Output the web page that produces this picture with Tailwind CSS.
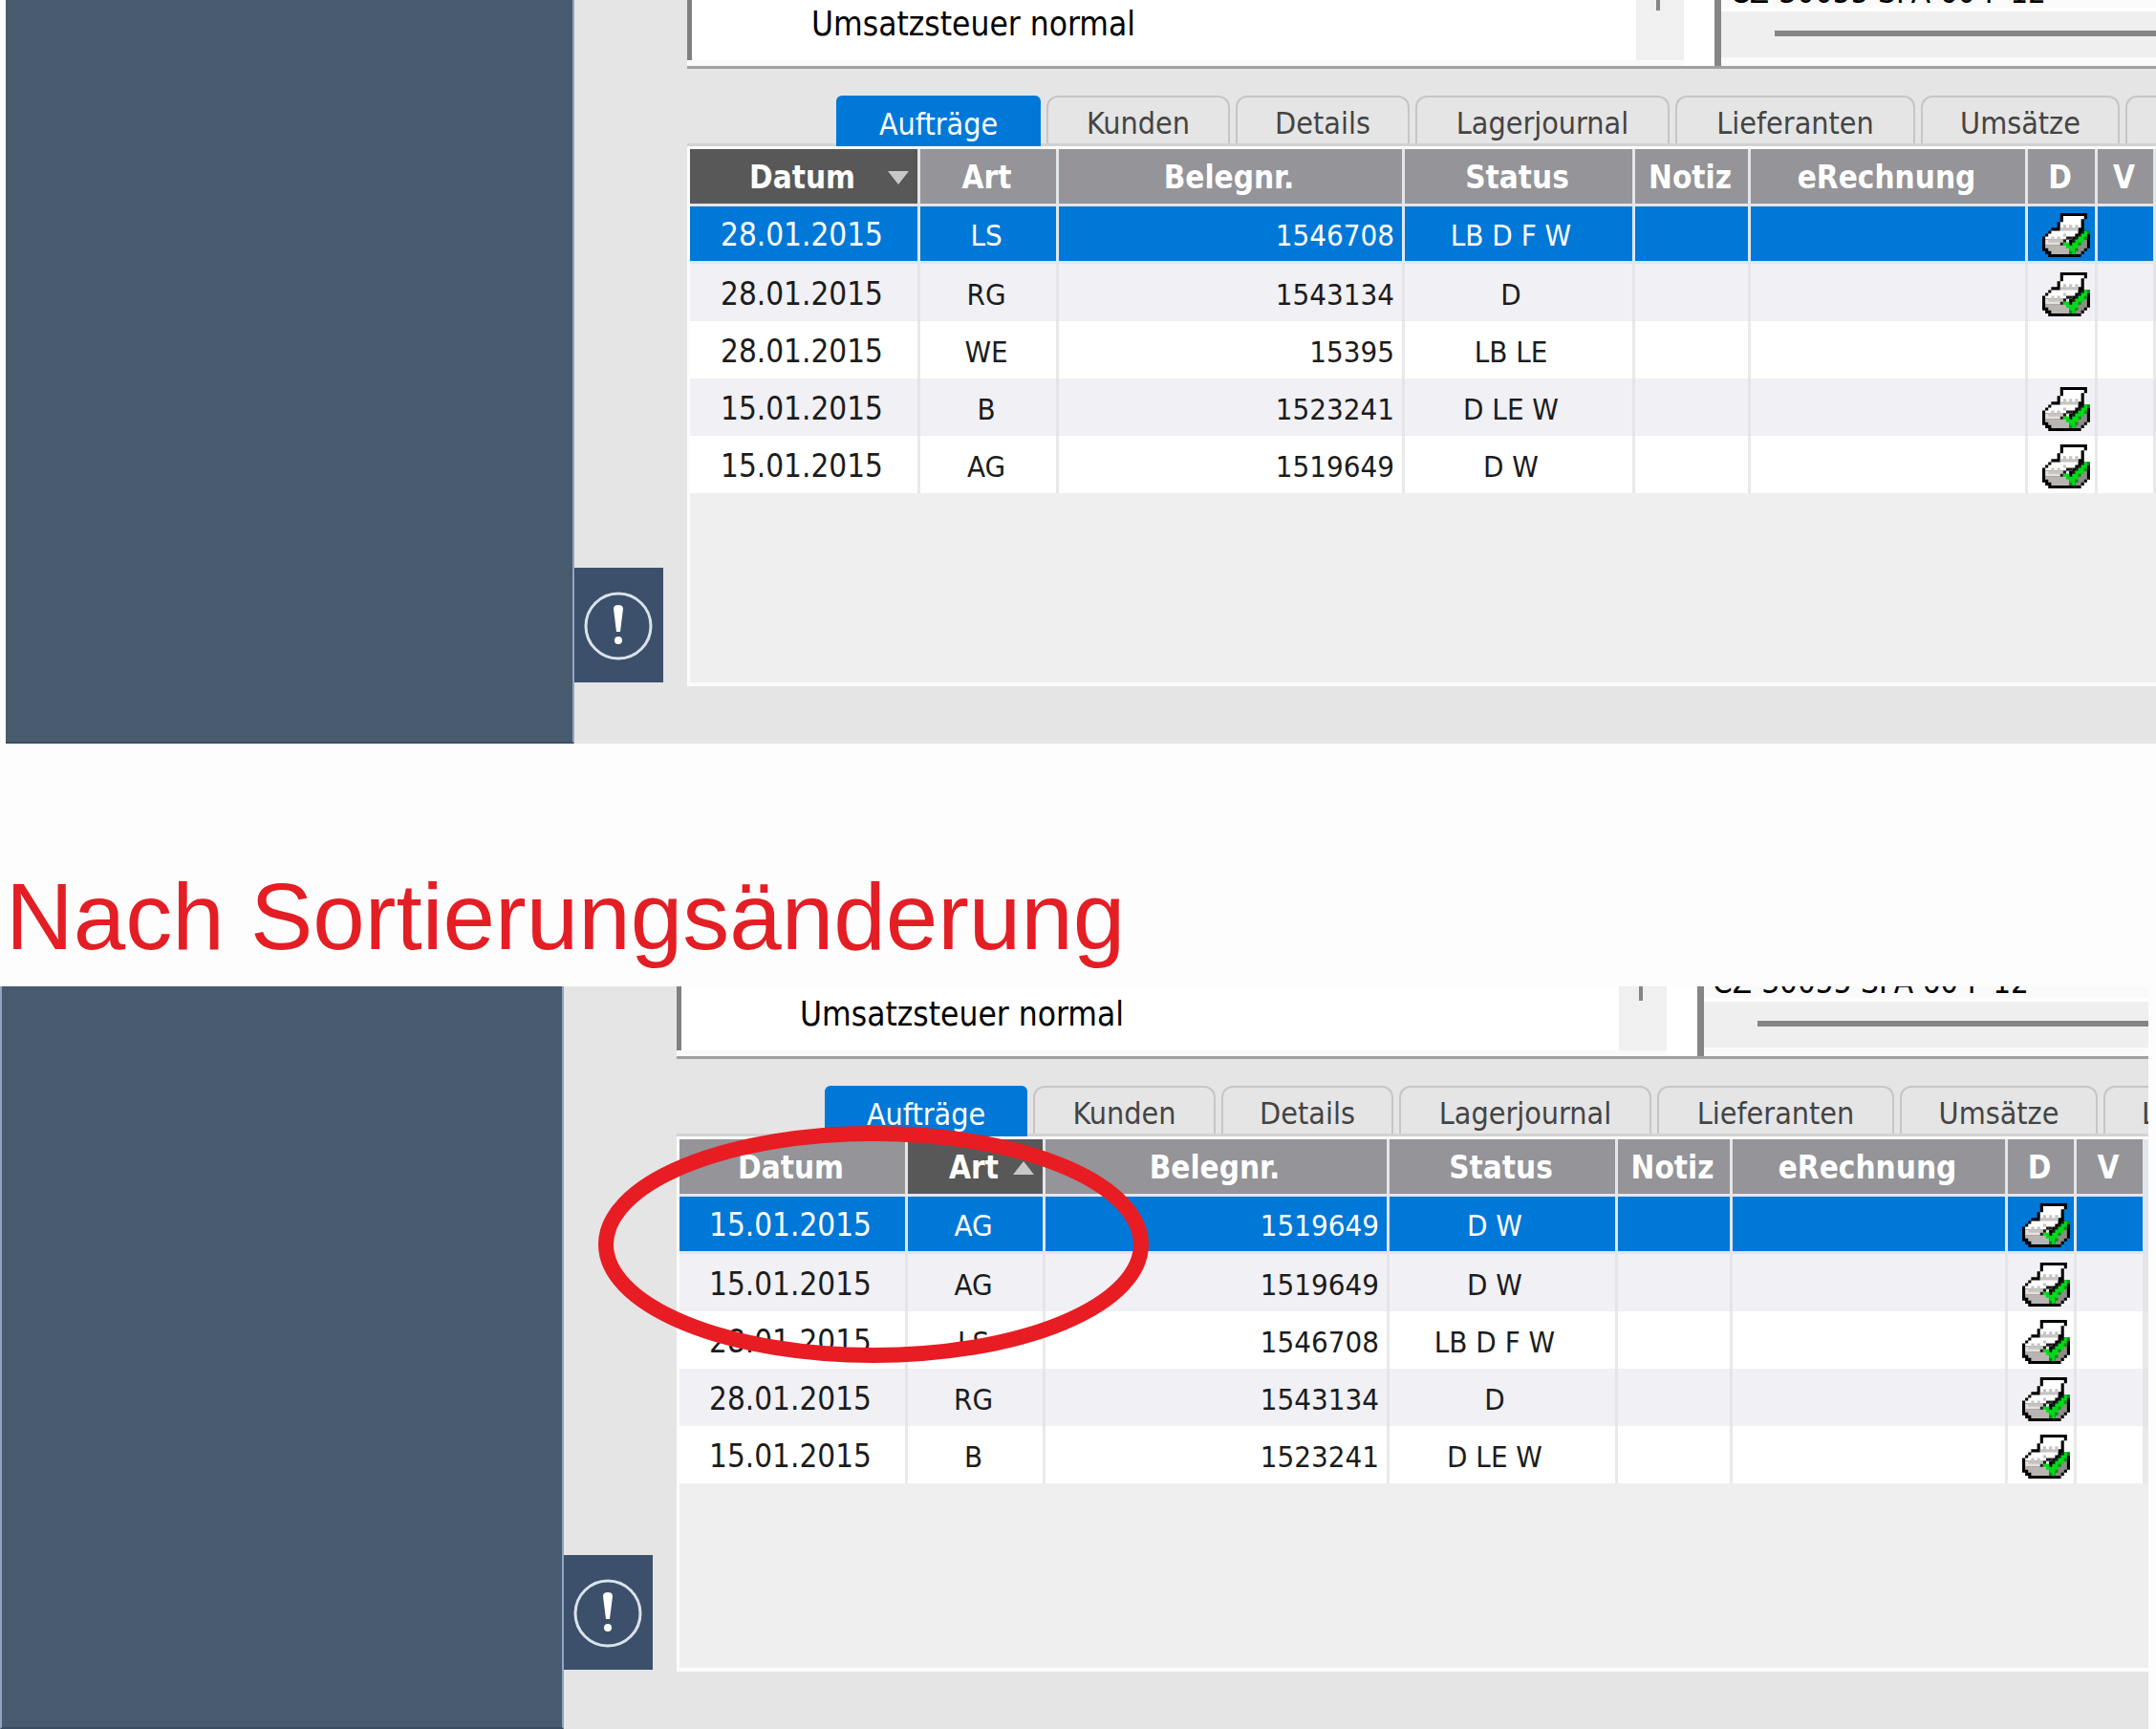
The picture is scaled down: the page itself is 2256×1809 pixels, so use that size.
<!DOCTYPE html>
<html lang="de">
<head>
  <meta charset="UTF-8" />
  <meta name="viewport" content="width=device-width, initial-scale=1.0" />
  <title>Nach Sortierungsänderung</title>
  <script src="https://cdn.jsdelivr.net/npm/@tailwindcss/browser@4"></script>
</head>
<body class="bg-[#fdfdfd] overflow-x-hidden font-['DejaVu_Sans_Condensed','DejaVu_Sans',sans-serif]">

  <!-- Ansicht vor der Sortierung -->
  <section class="ml-[6px] flex bg-[#e5e5e5]">
    <aside class="w-[595px] shrink-0 bg-[#485a6e] border-r-2 border-b-2 border-r-[#8fa5c2] border-b-[#3a4c62]"></aside>
    <div class="w-[93px] shrink-0 flex flex-col justify-end pb-[64px]">
      <button type="button" aria-label="Hinweis" class="h-[120px] bg-[#3c506b] flex items-center justify-center pr-[2px] pt-[2px]">
        <svg class="w-[76px] h-[76px]"><use href="#icon-hinweis"></use></svg>
      </button>
    </div>
    <main class="ml-[25px] flex-1 min-w-0 overflow-hidden">
      <div class="flex h-[72px] border-b-[3px] border-[#a0a0a0] bg-[#fafafa]">
        <div class="w-[1043px] h-[63px] shrink-0 flex border-l-[5px] border-l-[#808080] bg-white">
          <p class="flex-1 pl-[125px] pt-[6px] text-[35px] leading-[38px] text-black">Umsatzsteuer normal</p>
          <div class="w-[50px] bg-[#f0f0f0] pl-[21px]"><div class="w-[4px] h-[11px] bg-[#858585]"></div></div>
        </div>
        <div class="w-8 shrink-0 bg-white"></div>
        <div class="flex-1 min-w-0 border-l-[7px] border-[#858585] bg-[#fafafa]">
          <div class="h-[8px] flex items-end overflow-hidden pl-[9px] text-[33px] leading-[32px] whitespace-nowrap text-black">CZ-30055 SPA 60 F 12</div>
          <div class="h-[4px] bg-white"></div>
          <div class="h-[48px] bg-[#efefef] pl-[56px] pt-5"><div class="h-[6px] bg-[#858585]"></div></div>
        </div>
      </div>

      <nav class="mt-7 h-[53px] flex gap-[6px] pl-[156px] text-[32px] leading-[38px] text-[#444] whitespace-nowrap border-b-[3px] border-[#d2d2d2] *:pt-[6px]">
        <button type="button" class="w-[214px] h-[53px] shrink-0 rounded-t-[6px] bg-[#0078d7] text-white">Aufträge</button>
        <button type="button" class="w-[192px] shrink-0 rounded-t-[12px] border-2 border-b-0 border-[#c6c6c6]">Kunden</button>
        <button type="button" class="w-[182px] shrink-0 rounded-t-[12px] border-2 border-b-0 border-[#c6c6c6]">Details</button>
        <button type="button" class="w-[266px] shrink-0 rounded-t-[12px] border-2 border-b-0 border-[#c6c6c6]">Lagerjournal</button>
        <button type="button" class="w-[251px] shrink-0 rounded-t-[12px] border-2 border-b-0 border-[#c6c6c6]">Lieferanten</button>
        <button type="button" class="w-[208px] shrink-0 rounded-t-[12px] border-2 border-b-0 border-[#c6c6c6]">Umsätze</button>
        <button type="button" aria-label="Weitere" class="flex-1 rounded-tl-[12px] border-2 border-b-0 border-r-0 border-[#c6c6c6]"></button>
      </nav>

      <div class="h-[565px] border-t-[3px] border-l-[3px] border-b-[4px] border-[#fcfcfc] bg-[#efefef]">
        <table class="w-full table-fixed border-separate border-spacing-0 text-[31px] leading-[38px] text-center text-[#1c1c1c] whitespace-nowrap">
          <thead>
            <tr class="h-[60px] text-[33px] text-white bg-[#949499] *:border-r-[3px] *:border-b-[3px] *:border-[#e3e6ea] *:pt-[3px] *:pr-[3px] *:font-bold">
              <th scope="col" class="w-[241px] bg-[#585858] relative">Datum
                <svg class="absolute right-[9px] top-[23px] w-[22px] h-[14px]" viewBox="0 0 22 14"><path d="M0 0h22L11 14z" fill="#c8c8c8" /></svg>
              </th>
              <th scope="col" class="w-[145px]">Art</th>
              <th scope="col" class="w-[362px]">Belegnr.</th>
              <th scope="col" class="w-[241px]">Status</th>
              <th scope="col" class="w-[121px]">Notiz</th>
              <th scope="col" class="w-[290px]">eRechnung</th>
              <th scope="col" class="w-[73px]">D</th>
              <th scope="col">V</th>
            </tr>
          </thead>
          <tbody>
            <tr class="h-[60px] bg-[#0078d7] text-white *:border-r-[3px] *:border-b-[3px] *:border-[#dfe6ee] *:pt-[3px]">
              <td class="pr-1 text-[33px]">28.01.2015</td><td class="pr-1">LS</td><td class="text-right pr-[8px]">1546708</td><td class="pr-4">LB D F W</td><td></td><td></td>
              <td><svg class="ml-[15px] w-[50px] h-[46px]"><use href="#icon-drucker"></use></svg></td><td></td>
            </tr>
            <tr class="h-[60px] bg-[#f0f0f5] *:border-r-[3px] *:border-[#e5e5e9] *:pt-[3px]">
              <td class="pr-1 text-[33px]">28.01.2015</td><td class="pr-1">RG</td><td class="text-right pr-[8px]">1543134</td><td class="pr-4">D</td><td></td><td></td>
              <td><svg class="ml-[15px] w-[50px] h-[46px]"><use href="#icon-drucker"></use></svg></td><td></td>
            </tr>
            <tr class="h-[60px] bg-white *:border-r-[3px] *:border-[#e9e9e9] *:pt-[3px]">
              <td class="pr-1 text-[33px]">28.01.2015</td><td class="pr-1">WE</td><td class="text-right pr-[8px]">15395</td><td class="pr-4">LB LE</td><td></td><td></td><td></td><td></td>
            </tr>
            <tr class="h-[60px] bg-[#f0f0f5] *:border-r-[3px] *:border-[#e5e5e9] *:pt-[3px]">
              <td class="pr-1 text-[33px]">15.01.2015</td><td class="pr-1">B</td><td class="text-right pr-[8px]">1523241</td><td class="pr-4">D LE W</td><td></td><td></td>
              <td><svg class="ml-[15px] w-[50px] h-[46px]"><use href="#icon-drucker"></use></svg></td><td></td>
            </tr>
            <tr class="h-[60px] bg-white *:border-r-[3px] *:border-[#e9e9e9] *:pt-[3px]">
              <td class="pr-1 text-[33px]">15.01.2015</td><td class="pr-1">AG</td><td class="text-right pr-[8px]">1519649</td><td class="pr-4">D W</td><td></td><td></td>
              <td><svg class="ml-[15px] w-[50px] h-[46px]"><use href="#icon-drucker"></use></svg></td><td></td>
            </tr>
          </tbody>
        </table>
      </div>
      <div class="h-[60px]"></div>
    </main>
  </section>

  <h1 class="pl-[6px] pt-[126px] pb-[18px] text-[98px] leading-[110px] text-[#e31e24] whitespace-nowrap font-['Liberation_Sans',Arial,sans-serif]">Nach Sortierungsänderung</h1>

  <!-- Ansicht nach der Sortierung -->
  <section class="relative mr-2 flex bg-[#e5e5e5]">
    <aside class="w-[590px] shrink-0 bg-[#485a6e] border-x-2 border-b-2 border-x-[#8fa5c2] border-b-[#3a4c62]"></aside>
    <div class="w-[93px] shrink-0 flex flex-col justify-end pb-[62px]">
      <button type="button" aria-label="Hinweis" class="h-[120px] bg-[#3c506b] flex items-center justify-center pr-[2px] pt-[2px]">
        <svg class="w-[76px] h-[76px]"><use href="#icon-hinweis"></use></svg>
      </button>
    </div>
    <main class="ml-[25px] flex-1 min-w-0 overflow-hidden">
      <div class="flex h-[76px] border-b-[3px] border-[#a0a0a0] bg-[#fafafa]">
        <div class="w-[1036px] h-[67px] shrink-0 flex border-l-[5px] border-l-[#808080] bg-white">
          <p class="flex-1 pl-[124px] pt-[10px] text-[35px] leading-[38px] text-black">Umsatzsteuer normal</p>
          <div class="w-[50px] bg-[#f0f0f0] pl-[21px]"><div class="w-[4px] h-[15px] bg-[#858585]"></div></div>
        </div>
        <div class="w-8 shrink-0 bg-white"></div>
        <div class="flex-1 min-w-0 border-l-[7px] border-[#858585] bg-[#fafafa]">
          <div class="h-[12px] flex items-end overflow-hidden pl-[9px] text-[33px] leading-[32px] whitespace-nowrap text-black">CZ-30055 SPA 60 F 12</div>
          <div class="h-[4px] bg-white"></div>
          <div class="h-[48px] bg-[#efefef] pl-[56px] pt-5"><div class="h-[6px] bg-[#858585]"></div></div>
        </div>
      </div>

      <nav class="mt-7 h-[53px] flex gap-[6px] pl-[155px] text-[32px] leading-[38px] text-[#444] whitespace-nowrap border-b-[3px] border-[#d2d2d2] *:pt-[6px]">
        <button type="button" class="w-[212px] h-[53px] shrink-0 rounded-t-[6px] bg-[#0078d7] text-white">Aufträge</button>
        <button type="button" class="w-[191px] shrink-0 rounded-t-[12px] border-2 border-b-0 border-[#c6c6c6]">Kunden</button>
        <button type="button" class="w-[180px] shrink-0 rounded-t-[12px] border-2 border-b-0 border-[#c6c6c6]">Details</button>
        <button type="button" class="w-[264px] shrink-0 rounded-t-[12px] border-2 border-b-0 border-[#c6c6c6]">Lagerjournal</button>
        <button type="button" class="w-[248px] shrink-0 rounded-t-[12px] border-2 border-b-0 border-[#c6c6c6]">Lieferanten</button>
        <button type="button" class="w-[207px] shrink-0 rounded-t-[12px] border-2 border-b-0 border-[#c6c6c6]">Umsätze</button>
        <button type="button" class="flex-1 min-w-0 overflow-hidden rounded-tl-[12px] border-2 border-b-0 border-r-0 border-[#c6c6c6] pl-[38px] text-left">L</button>
      </nav>

      <div class="h-[560px] border-t-[3px] border-l-[3px] border-b-[4px] border-[#fcfcfc] bg-[#efefef]">
        <table class="w-full table-fixed border-separate border-spacing-0 text-[31px] leading-[38px] text-center text-[#1c1c1c] whitespace-nowrap">
          <thead>
            <tr class="h-[60px] text-[33px] text-white bg-[#949499] *:border-r-[3px] *:border-b-[3px] *:border-[#e3e6ea] *:pt-[3px] *:pr-[3px] *:font-bold">
              <th scope="col" class="w-[239px]">Datum</th>
              <th scope="col" class="w-[144px] bg-[#585858] relative">Art
                <svg class="absolute right-[9px] top-[23px] w-[22px] h-[14px]" viewBox="0 0 22 14"><path d="M0 14h22L11 0z" fill="#c8c8c8" /></svg>
              </th>
              <th scope="col" class="w-[360px]">Belegnr.</th>
              <th scope="col" class="w-[239px]">Status</th>
              <th scope="col" class="w-[120px]">Notiz</th>
              <th scope="col" class="w-[288px]">eRechnung</th>
              <th scope="col" class="w-[72px]">D</th>
              <th scope="col" class="w-[72px]">V</th>
              <td class="border-r-0"></td>
            </tr>
          </thead>
          <tbody>
            <tr class="h-[60px] bg-[#0078d7] text-white *:border-r-[3px] *:border-b-[3px] *:border-[#dfe6ee] *:pt-[3px]">
              <td class="pr-1 text-[33px]">15.01.2015</td><td class="pr-1">AG</td><td class="text-right pr-[8px]">1519649</td><td class="pr-4">D W</td><td></td><td></td>
              <td><svg class="ml-[15px] w-[50px] h-[46px]"><use href="#icon-drucker"></use></svg></td><td></td><td></td>
            </tr>
            <tr class="h-[60px] bg-[#f0f0f5] *:border-r-[3px] *:border-[#e5e5e9] *:pt-[3px]">
              <td class="pr-1 text-[33px]">15.01.2015</td><td class="pr-1">AG</td><td class="text-right pr-[8px]">1519649</td><td class="pr-4">D W</td><td></td><td></td>
              <td><svg class="ml-[15px] w-[50px] h-[46px]"><use href="#icon-drucker"></use></svg></td><td></td><td></td>
            </tr>
            <tr class="h-[60px] bg-white *:border-r-[3px] *:border-[#e9e9e9] *:pt-[3px]">
              <td class="pr-1 text-[33px]">28.01.2015</td><td class="pr-1">LS</td><td class="text-right pr-[8px]">1546708</td><td class="pr-4">LB D F W</td><td></td><td></td>
              <td><svg class="ml-[15px] w-[50px] h-[46px]"><use href="#icon-drucker"></use></svg></td><td></td><td></td>
            </tr>
            <tr class="h-[60px] bg-[#f0f0f5] *:border-r-[3px] *:border-[#e5e5e9] *:pt-[3px]">
              <td class="pr-1 text-[33px]">28.01.2015</td><td class="pr-1">RG</td><td class="text-right pr-[8px]">1543134</td><td class="pr-4">D</td><td></td><td></td>
              <td><svg class="ml-[15px] w-[50px] h-[46px]"><use href="#icon-drucker"></use></svg></td><td></td><td></td>
            </tr>
            <tr class="h-[60px] bg-white *:border-r-[3px] *:border-[#e9e9e9] *:pt-[3px]">
              <td class="pr-1 text-[33px]">15.01.2015</td><td class="pr-1">B</td><td class="text-right pr-[8px]">1523241</td><td class="pr-4">D LE W</td><td></td><td></td>
              <td><svg class="ml-[15px] w-[50px] h-[46px]"><use href="#icon-drucker"></use></svg></td><td></td><td></td>
            </tr>
          </tbody>
        </table>
      </div>
      <div class="h-[60px]"></div>
    </main>

    <!-- Markierung um die geänderten Spalten -->
    <svg class="absolute left-[626px] top-[146px] w-[576px] h-[248px] pointer-events-none" viewBox="0 0 576 248">
      <ellipse cx="288" cy="124" rx="280" ry="116" fill="none" stroke="#e71d23" stroke-width="16" />
    </svg>
  </section>

  <svg xmlns="http://www.w3.org/2000/svg" class="hidden">
    <symbol id="icon-hinweis" viewBox="0 0 76 76">
      <circle cx="38" cy="38" r="34" fill="none" stroke="#d9e3ea" stroke-width="3" />
      <path d="M33 20q0-4 5-4t5 4l-3 24h-4z" fill="#fff" />
      <circle cx="38" cy="53" r="4" fill="#fff" />
    </symbol>
    <!-- Drucker im 16x15-Raster -->
    <symbol id="icon-drucker" viewBox="0 0 16 15" preserveAspectRatio="none">
      <path d="M6 0h9v2h-1v4h2v6h-1v1h-1v1h-1v1H2v-1H1v-1H0V8h1V7h1V6h1V5h2V3h1z" fill="#000" />
      <path d="M7 1h7v1h-1v3h-1v1H6V3h1zM3 6h9v1h-1v1h-1v1H1V8h1V7h1z" fill="#fff" />
      <path d="M1 9h8v2H1z" fill="#e4e1df" />
      <path d="M1 11h8v2H2v-1H1zM3 13h6v1H3z" fill="#b9b5b3" />
      <path d="M12 9h3v3h-1v1h-1v1h-2v-3h1z" fill="#8f8b89" />
      <path d="M7 4h1v1H7zM9 4h1v1H9zM11 4h1v1h-1zM6 5h6v1H6zM3 8h1v1H3zM5 8h1v1H5zM7 7h1v1H7zM2 9h5v1H2z" fill="#c6c3c1" />
      <path d="M7 9h1v1H7zM8 8h2v1H8zM6 10h1v1H6zM10 9h1v1h-1zM13 6h1v1h-1zM12 7h1v1h-1zM11 8h1v1h-1z" fill="#1d1d1d" />
      <path d="M14 6h2v1h-1v2h-1v1h-1v1h-1v1h-1v2H9v-2H8v-1H7v-1h2v1h1v-1h1V9h1V8h1V7h1z" fill="#00d91a" />
      <path d="M15 6h1v1h-1zM14 8h1v1h-1zM12 10h1v1h-1zM11 12h1v1h-1zM9 13h1v1H9z" fill="#068a12" />
    </symbol>
  </svg>

</body>
</html>
